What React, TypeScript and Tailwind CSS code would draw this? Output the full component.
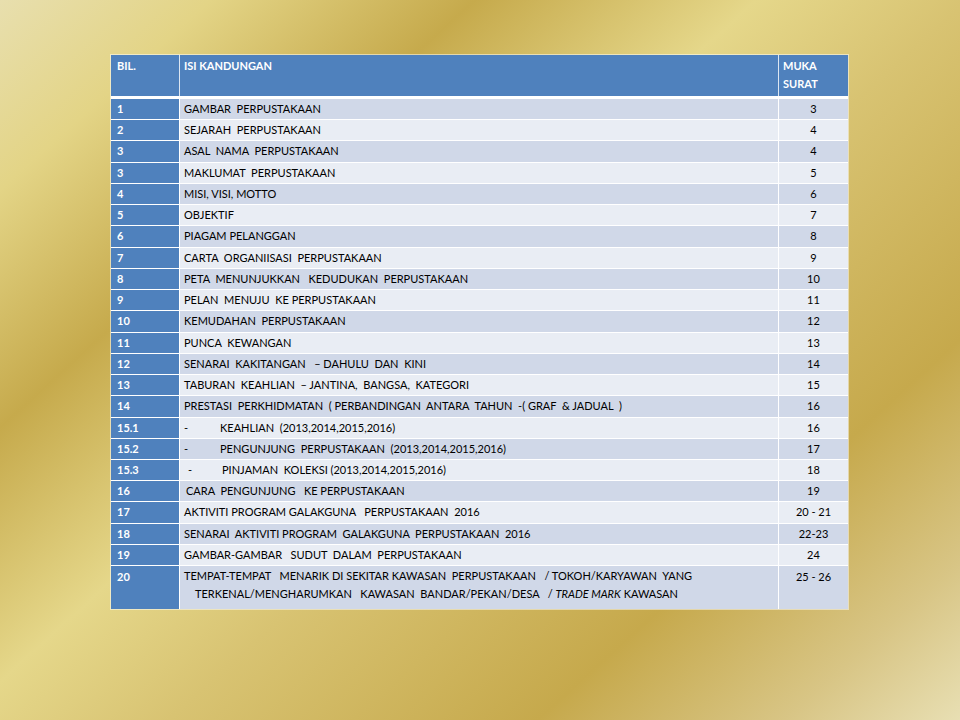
import React from "react";

type Row = { no: string; text: React.ReactNode; page: string };

const rows: Row[] = [
  { no: "1", text: "GAMBAR  PERPUSTAKAAN", page: "3" },
  { no: "2", text: "SEJARAH  PERPUSTAKAAN", page: "4" },
  { no: "3", text: "ASAL  NAMA  PERPUSTAKAAN", page: "4" },
  { no: "3", text: "MAKLUMAT  PERPUSTAKAAN", page: "5" },
  { no: "4", text: "MISI, VISI, MOTTO", page: "6" },
  { no: "5", text: "OBJEKTIF", page: "7" },
  { no: "6", text: "PIAGAM PELANGGAN", page: "8" },
  { no: "7", text: "CARTA  ORGANIISASI  PERPUSTAKAAN", page: "9" },
  { no: "8", text: "PETA  MENUNJUKKAN   KEDUDUKAN  PERPUSTAKAAN", page: "10" },
  { no: "9", text: "PELAN  MENUJU  KE PERPUSTAKAAN", page: "11" },
  { no: "10", text: "KEMUDAHAN  PERPUSTAKAAN", page: "12" },
  { no: "11", text: "PUNCA  KEWANGAN", page: "13" },
  { no: "12", text: "SENARAI  KAKITANGAN   – DAHULU  DAN  KINI", page: "14" },
  { no: "13", text: "TABURAN  KEAHLIAN  – JANTINA,  BANGSA,  KATEGORI", page: "15" },
  { no: "14", text: "PRESTASI  PERKHIDMATAN  ( PERBANDINGAN  ANTARA  TAHUN  -( GRAF  & JADUAL  )", page: "16" },
  {
    no: "15.1",
    text: (
      <span className="flex">
        <span className="w-[36px]">-</span>
        <span>KEAHLIAN  (2013,2014,2015,2016)</span>
      </span>
    ),
    page: "16",
  },
  {
    no: "15.2",
    text: (
      <span className="flex">
        <span className="w-[36px]">-</span>
        <span>PENGUNJUNG  PERPUSTAKAAN  (2013,2014,2015,2016)</span>
      </span>
    ),
    page: "17",
  },
  {
    no: "15.3",
    text: (
      <span className="flex pl-[4px]">
        <span className="w-[34px]">-</span>
        <span>PINJAMAN  KOLEKSI (2013,2014,2015,2016)</span>
      </span>
    ),
    page: "18",
  },
  { no: "16", text: <span className="pl-[2px]">CARA  PENGUNJUNG   KE PERPUSTAKAAN</span>, page: "19" },
  { no: "17", text: "AKTIVITI PROGRAM GALAKGUNA   PERPUSTAKAAN  2016", page: "20 - 21" },
  { no: "18", text: "SENARAI  AKTIVITI PROGRAM  GALAKGUNA  PERPUSTAKAAN  2016", page: "22-23" },
  { no: "19", text: "GAMBAR-GAMBAR   SUDUT  DALAM  PERPUSTAKAAN", page: "24" },
];

export default function App() {
  return (
    <div
      className="w-[960px] h-[720px] overflow-hidden bg-[linear-gradient(138deg,#e8dfae_0%,#e3d486_12%,#c6aa4c_27%,#e5d78a_43%,#d8c372_55%,#c6a94c_76%,#d8c585_90%,#e8dfb3_100%)] pt-[55px] pl-[111px]"
      style={{ fontFamily: "Lato, 'Open Sans', sans-serif" }}
    >
      <div className="w-[737px] bg-white flex flex-col text-[11px] leading-[20px] whitespace-pre text-black outline outline-1 outline-white/50">
        {/* header */}
        <div className="flex h-[41px] bg-[#4f81bd] text-white font-bold">
          <div className="w-[68px] pl-[6px] pt-[2px] leading-[18px]">BIL.</div>
          <div className="w-[1px] bg-white/80" />
          <div className="flex-1 pl-[4px] pt-[2px] leading-[18px]">ISI KANDUNGAN</div>
          <div className="w-[1px] bg-white/80" />
          <div className="w-[69px] pl-[4px] pt-[2px] leading-[18px]">
            MUKA
            <br />
            SURAT
          </div>
        </div>
        <div className="h-[3px] bg-white" />
        {rows.map((r, i) => (
          <div
            key={i}
            className={`flex h-[21.24px] border-b border-white ${i % 2 === 0 ? "bg-[#d0d8e8]" : "bg-[#e9edf4]"}`}
          >
            <div className="w-[68px] bg-[#4f81bd] text-white font-bold pl-[6px]">{r.no}</div>
            <div className="w-[1px] bg-white" />
            <div className="flex-1 pl-[4px]">{r.text}</div>
            <div className="w-[1px] bg-white" />
            <div className="w-[69px] text-center">{r.page}</div>
          </div>
        ))}
        <div className="flex h-[43px] bg-[#d0d8e8]">
          <div className="w-[68px] bg-[#4f81bd] text-white font-bold pl-[6px] pt-[1px]">20</div>
          <div className="w-[1px] bg-white" />
          <div className="flex-1 pl-[4px] pt-[1px] leading-[18px]">
            TEMPAT-TEMPAT   MENARIK DI SEKITAR KAWASAN  PERPUSTAKAAN   / TOKOH/KARYAWAN  YANG
            <br />
            {"    TERKENAL/MENGHARUMKAN   KAWASAN  BANDAR/PEKAN/DESA   / "}
            <i>TRADE MARK</i> KAWASAN
          </div>
          <div className="w-[1px] bg-white" />
          <div className="w-[69px] text-center pt-[1px]">25 - 26</div>
        </div>
      </div>
    </div>
  );
}
